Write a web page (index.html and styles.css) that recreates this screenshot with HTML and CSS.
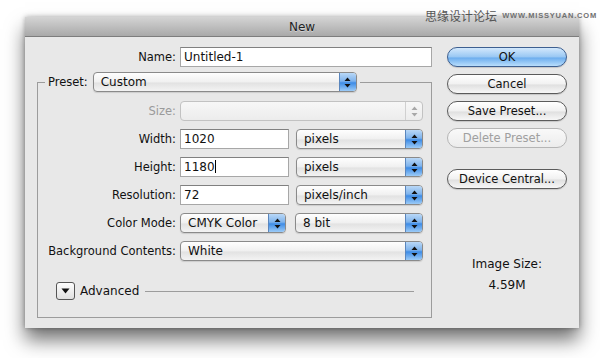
FILE: index.html
```html
<!DOCTYPE html>
<html lang="en">
<head>
    <meta charset="UTF-8">
    <meta name="viewport" content="width=device-width, initial-scale=1.0">
    <title>New</title>
    <link rel="stylesheet" href="styles.css">
</head>
<body>
    <div class="watermark"><span class="wm-cn">思缘设计论坛</span><span class="wm-en">WWW.MISSYUAN.COM</span></div>

    <div class="window">
        <div class="titlebar">New</div>
        <div class="content">
            <div class="main">
                <div class="name-row">
                    <label>Name:</label>
                    <div class="field">Untitled-1</div>
                </div>

                <fieldset class="preset">
                    <legend>
                        <span>Preset:</span>
                        <div class="select preset-select">
                            <span class="value">Custom</span>
                            <span class="arrows"><svg width="7" height="11" viewBox="0 0 7 11"><path d="M3.5 0.5L6.5 4H0.5z M3.5 10.5L6.5 7H0.5z"/></svg></span>
                        </div>
                    </legend>

                    <div class="rows">
                        <label class="disabled">Size:</label>
                        <div class="select disabled">
                            <span class="value"></span>
                            <span class="arrows"><svg width="7" height="11" viewBox="0 0 7 11"><path d="M3.5 0.5L6.5 4H0.5z M3.5 10.5L6.5 7H0.5z"/></svg></span>
                        </div>

                        <label>Width:</label>
                        <div class="pair">
                            <div class="field">1020</div>
                            <div class="select">
                                <span class="value">pixels</span>
                                <span class="arrows"><svg width="7" height="11" viewBox="0 0 7 11"><path d="M3.5 0.5L6.5 4H0.5z M3.5 10.5L6.5 7H0.5z"/></svg></span>
                            </div>
                        </div>

                        <label>Height:</label>
                        <div class="pair">
                            <div class="field">1180<span class="caret"></span></div>
                            <div class="select">
                                <span class="value">pixels</span>
                                <span class="arrows"><svg width="7" height="11" viewBox="0 0 7 11"><path d="M3.5 0.5L6.5 4H0.5z M3.5 10.5L6.5 7H0.5z"/></svg></span>
                            </div>
                        </div>

                        <label>Resolution:</label>
                        <div class="pair">
                            <div class="field">72</div>
                            <div class="select">
                                <span class="value">pixels/inch</span>
                                <span class="arrows"><svg width="7" height="11" viewBox="0 0 7 11"><path d="M3.5 0.5L6.5 4H0.5z M3.5 10.5L6.5 7H0.5z"/></svg></span>
                            </div>
                        </div>

                        <label>Color Mode:</label>
                        <div class="pair mode">
                            <div class="select">
                                <span class="value">CMYK Color</span>
                                <span class="arrows"><svg width="7" height="11" viewBox="0 0 7 11"><path d="M3.5 0.5L6.5 4H0.5z M3.5 10.5L6.5 7H0.5z"/></svg></span>
                            </div>
                            <div class="select">
                                <span class="value">8 bit</span>
                                <span class="arrows"><svg width="7" height="11" viewBox="0 0 7 11"><path d="M3.5 0.5L6.5 4H0.5z M3.5 10.5L6.5 7H0.5z"/></svg></span>
                            </div>
                        </div>

                        <label>Background Contents:</label>
                        <div class="select">
                            <span class="value">White</span>
                            <span class="arrows"><svg width="7" height="11" viewBox="0 0 7 11"><path d="M3.5 0.5L6.5 4H0.5z M3.5 10.5L6.5 7H0.5z"/></svg></span>
                        </div>
                    </div>

                    <div class="advanced">
                        <span class="disclosure"><svg width="9" height="6" viewBox="0 0 9 6"><path d="M0.5 0.5H8.5L4.5 5.5z"/></svg></span>
                        <span>Advanced</span>
                        <span class="rule"></span>
                    </div>
                </fieldset>
            </div>

            <div class="side">
                <button class="default">OK</button>
                <button>Cancel</button>
                <button>Save Preset...</button>
                <button disabled>Delete Preset...</button>
                <button class="spaced">Device Central...</button>

                <div class="image-size">
                    <p>Image Size:</p>
                    <p>4.59M</p>
                </div>
            </div>
        </div>
    </div>
</body>
</html>
```

FILE: styles.css
```css
body {
    margin: 0;
    width: 600px;
    height: 358px;
    overflow: hidden;
    background-color: #ffffff;
    font-family: "DejaVu Sans", sans-serif;
    font-size: 11.5px;
    color: #111;
    padding-top: 17px;
    box-sizing: border-box;
}

.watermark {
    position: absolute;
    top: 7px;
    right: 3px;
    display: flex;
    align-items: center;
    gap: 5px;
    color: #555;
}

.wm-cn {
    font-family: "Noto Sans CJK SC", sans-serif;
    font-size: 12px;
}

.wm-en {
    font-family: "Liberation Sans", sans-serif;
    font-size: 7.5px;
    font-weight: bold;
    letter-spacing: 0.8px;
    color: #707070;
}

.window {
    margin-left: 25px;
    width: 554px;
    height: 311px;
    background-color: #e8e8e8;
    box-shadow: 0 12px 18px rgba(0, 0, 0, 0.55), 0 0 5px rgba(0, 0, 0, 0.3);
}

.titlebar {
    height: 20px;
    box-sizing: border-box;
    background: linear-gradient(#d4d4d4, #a9a9a9);
    border-bottom: 1px solid #7d7d7d;
    text-align: center;
    line-height: 20px;
    font-size: 12px;
    color: #222;
    text-shadow: 0 1px 0 rgba(255, 255, 255, 0.4);
}

.content {
    display: flex;
    gap: 15px;
    padding: 10px 12px 0 12px;
}

.main {
    width: 395px;
}

label {
    text-align: right;
    line-height: 20px;
    white-space: nowrap;
}

label.disabled {
    color: #9a9a9a;
}

.name-row {
    display: grid;
    grid-template-columns: 139px 252px;
    column-gap: 4px;
}

.field {
    height: 20px;
    box-sizing: border-box;
    background: white;
    border: 1px solid #a7a7a7;
    border-top-color: #808080;
    padding-left: 3px;
    line-height: 18px;
    font-size: 12px;
}

.caret {
    display: inline-block;
    width: 1px;
    height: 13px;
    background: #000;
    vertical-align: -2px;
}

.preset {
    margin: 5px 0 0 0;
    padding: 0 8px 16px 0;
    border: 1px solid #9c9c9c;
    height: 246px;
    box-sizing: border-box;
}

.preset legend {
    display: flex;
    align-items: center;
    gap: 5px;
    margin-left: 7px;
    padding: 0 3px;
}

.preset-select {
    width: 264px;
}

.select {
    display: flex;
    height: 20px;
    box-sizing: border-box;
    border: 1px solid #8a8a8a;
    border-radius: 4px;
    background: linear-gradient(#fefefe, #f0f0f0 50%, #e2e2e2 55%, #f3f3f3);
    box-shadow: 0 1px 1px rgba(0, 0, 0, 0.12);
}

.select .value {
    flex: 1;
    padding-left: 7px;
    line-height: 18px;
    font-size: 12px;
}

.select .arrows {
    width: 16px;
    display: flex;
    align-items: center;
    justify-content: center;
    border-left: 1px solid #5a86bd;
    border-radius: 0 3px 3px 0;
    background: linear-gradient(#b9d8f7, #7fb3ec 45%, #3e8ce6 55%, #9ccbf7);
}

.select .arrows svg {
    fill: #111;
}

.select.disabled {
    border-color: #c2c2c2;
    background: linear-gradient(#f7f7f7, #ececec);
    box-shadow: none;
}

.select.disabled .arrows {
    border-left-color: #d0d0d0;
    background: none;
}

.select.disabled .arrows svg {
    fill: #a8a8a8;
}

.rows {
    display: grid;
    grid-template-columns: 138px 243px;
    column-gap: 4px;
    row-gap: 8px;
    margin-top: 9px;
}

.pair {
    display: grid;
    grid-template-columns: 109px 127px;
    column-gap: 7px;
}

.pair.mode {
    grid-template-columns: 106px 128px;
    column-gap: 9px;
}

.advanced {
    display: flex;
    align-items: center;
    gap: 5px;
    margin-top: 21px;
    padding: 0 9px 0 18px;
    font-size: 12px;
}

.disclosure {
    width: 19px;
    height: 18px;
    box-sizing: border-box;
    display: flex;
    align-items: center;
    justify-content: center;
    border: 1px solid #555;
    border-radius: 3px;
    background: linear-gradient(#fdfdfd, #e0e0e0);
}

.disclosure svg {
    fill: #111;
}

.rule {
    flex: 1;
    height: 1px;
    background: #9c9c9c;
    margin-left: 1px;
}

.side {
    width: 120px;
    display: flex;
    flex-direction: column;
    gap: 7px;
}

button {
    height: 20px;
    padding: 0;
    border: 1px solid #5b5b5b;
    border-radius: 10px;
    background: linear-gradient(#ffffff, #f1f1f1 50%, #e0e0e0 55%, #f7f7f7);
    font-family: "DejaVu Sans", sans-serif;
    font-size: 11.5px;
    color: #111;
    box-shadow: 0 1px 1px rgba(0, 0, 0, 0.15);
}

button.default {
    border-color: #3d5f90;
    background: linear-gradient(#d3e8fc, #98c7f3 50%, #6cadee 55%, #b9defc);
}

button:disabled {
    color: #a0a0a0;
    border-color: #b5b5b5;
    background: linear-gradient(#f9f9f9, #ececec);
    box-shadow: none;
}

button.spaced {
    margin-top: 14px;
}

.image-size {
    margin-top: 58px;
    text-align: center;
    font-size: 12px;
}

.image-size p {
    margin: 0;
    line-height: 21px;
}
```
